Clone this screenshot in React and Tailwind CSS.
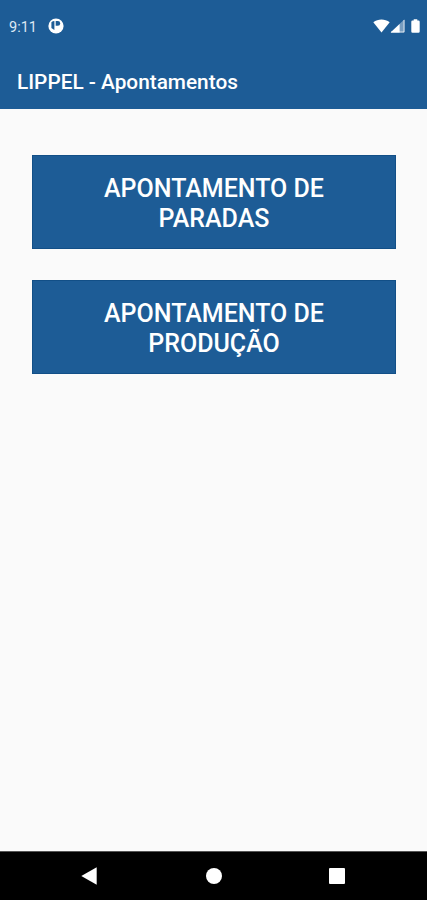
const MENU_ITEMS = [
  { id: "paradas", lines: ["APONTAMENTO DE", "PARADAS"] },
  { id: "producao", lines: ["APONTAMENTO DE", "PRODUÇÃO"] },
];

function StatusBar() {
  return (
    <div className="flex h-[52px] items-center justify-between pl-[9px] pr-[7px] text-white">
      <div className="flex items-center gap-[11px]">
        <span className="pt-[3px] text-[14.5px] leading-[18px] text-[#dce8f4]">9:11</span>
        <svg className="h-4 w-4" viewBox="0 0 16 16" fill="none">
          <circle cx="8" cy="8" r="7.6" fill="#fff" />
          <path d="M3.4 4.2Q4.6 3 6.4 3V12L3.4 10Z" fill="#1d5c96" />
          <path d="M7.7 3H9.8A2.4 2.4 0 0 1 9.8 7.8H7.7Z" fill="#1d5c96" />
        </svg>
      </div>
      <div className="flex items-center">
        <svg className="h-[14px] w-[17px]" viewBox="0 0 16 14" preserveAspectRatio="none" fill="#fff">
          <path d="M0.3 3.2C4.8 -0.4 11.2 -0.4 15.7 3.2L8 13.4Z" />
        </svg>
        <svg className="h-[14px] w-[15px]" viewBox="0 0 15 14">
          <path d="M0.6 13.4L14.5 0.3V13.4Z" fill="#fff" fillOpacity="0.4" />
          <path d="M0.6 13.4L9.6 4.9V13.4Z" fill="#fff" />
          <path d="M14 1V13H1" fill="none" stroke="#fff" strokeOpacity="0.75" />
        </svg>
        <svg className="ml-[6px] h-[14px] w-[9px]" viewBox="0 0 9 14" fill="#fff">
          <path d="M2.7 0.2H6.3V1.6H7.5Q8.7 1.6 8.7 2.8V12.6Q8.7 13.8 7.5 13.8H1.5Q0.3 13.8 0.3 12.6V2.8Q0.3 1.6 1.5 1.6H2.7Z" />
        </svg>
      </div>
    </div>
  );
}

function NavigationBar() {
  return (
    <nav className="flex h-[49px] items-center justify-between border-t border-[#555] bg-black pl-[81px] pr-[82px]">
      <button type="button" aria-label="Voltar">
        <svg className="h-[18px] w-4" viewBox="0 0 16 18" fill="#fff">
          <path d="M0.3 9L15.7 0.2V17.8Z" />
        </svg>
      </button>
      <button
        type="button"
        aria-label="Início"
        className="ml-[1px] h-4 w-4 rounded-full bg-white"
      />
      <button
        type="button"
        aria-label="Recentes"
        className="h-4 w-4 rounded-[1px] bg-white"
      />
    </nav>
  );
}

export default function App() {
  return (
    <div className="flex h-screen w-full flex-col bg-[#fafafa] font-['Roboto',sans-serif]">
      <header className="h-[109px] bg-[#1d5c96]">
        <StatusBar />
        <h1 className="flex h-[57px] items-center pl-[17px] pt-[4px] text-[20.8px] font-medium text-white">
          LIPPEL - Apontamentos
        </h1>
      </header>

      <main className="flex flex-1 flex-col gap-[31px] pl-8 pr-[31px] pt-[46px]">
        {MENU_ITEMS.map((item) => (
          <button
            key={item.id}
            type="button"
            className="h-[94px] w-full border border-[#124f87] bg-[#1d5c96] pt-[3px] text-[25px] leading-[29.4px] font-medium text-white"
          >
            {item.lines.map((line) => (
              <span key={line} className="block">
                {line}
              </span>
            ))}
          </button>
        ))}
      </main>

      <NavigationBar />
    </div>
  );
}
